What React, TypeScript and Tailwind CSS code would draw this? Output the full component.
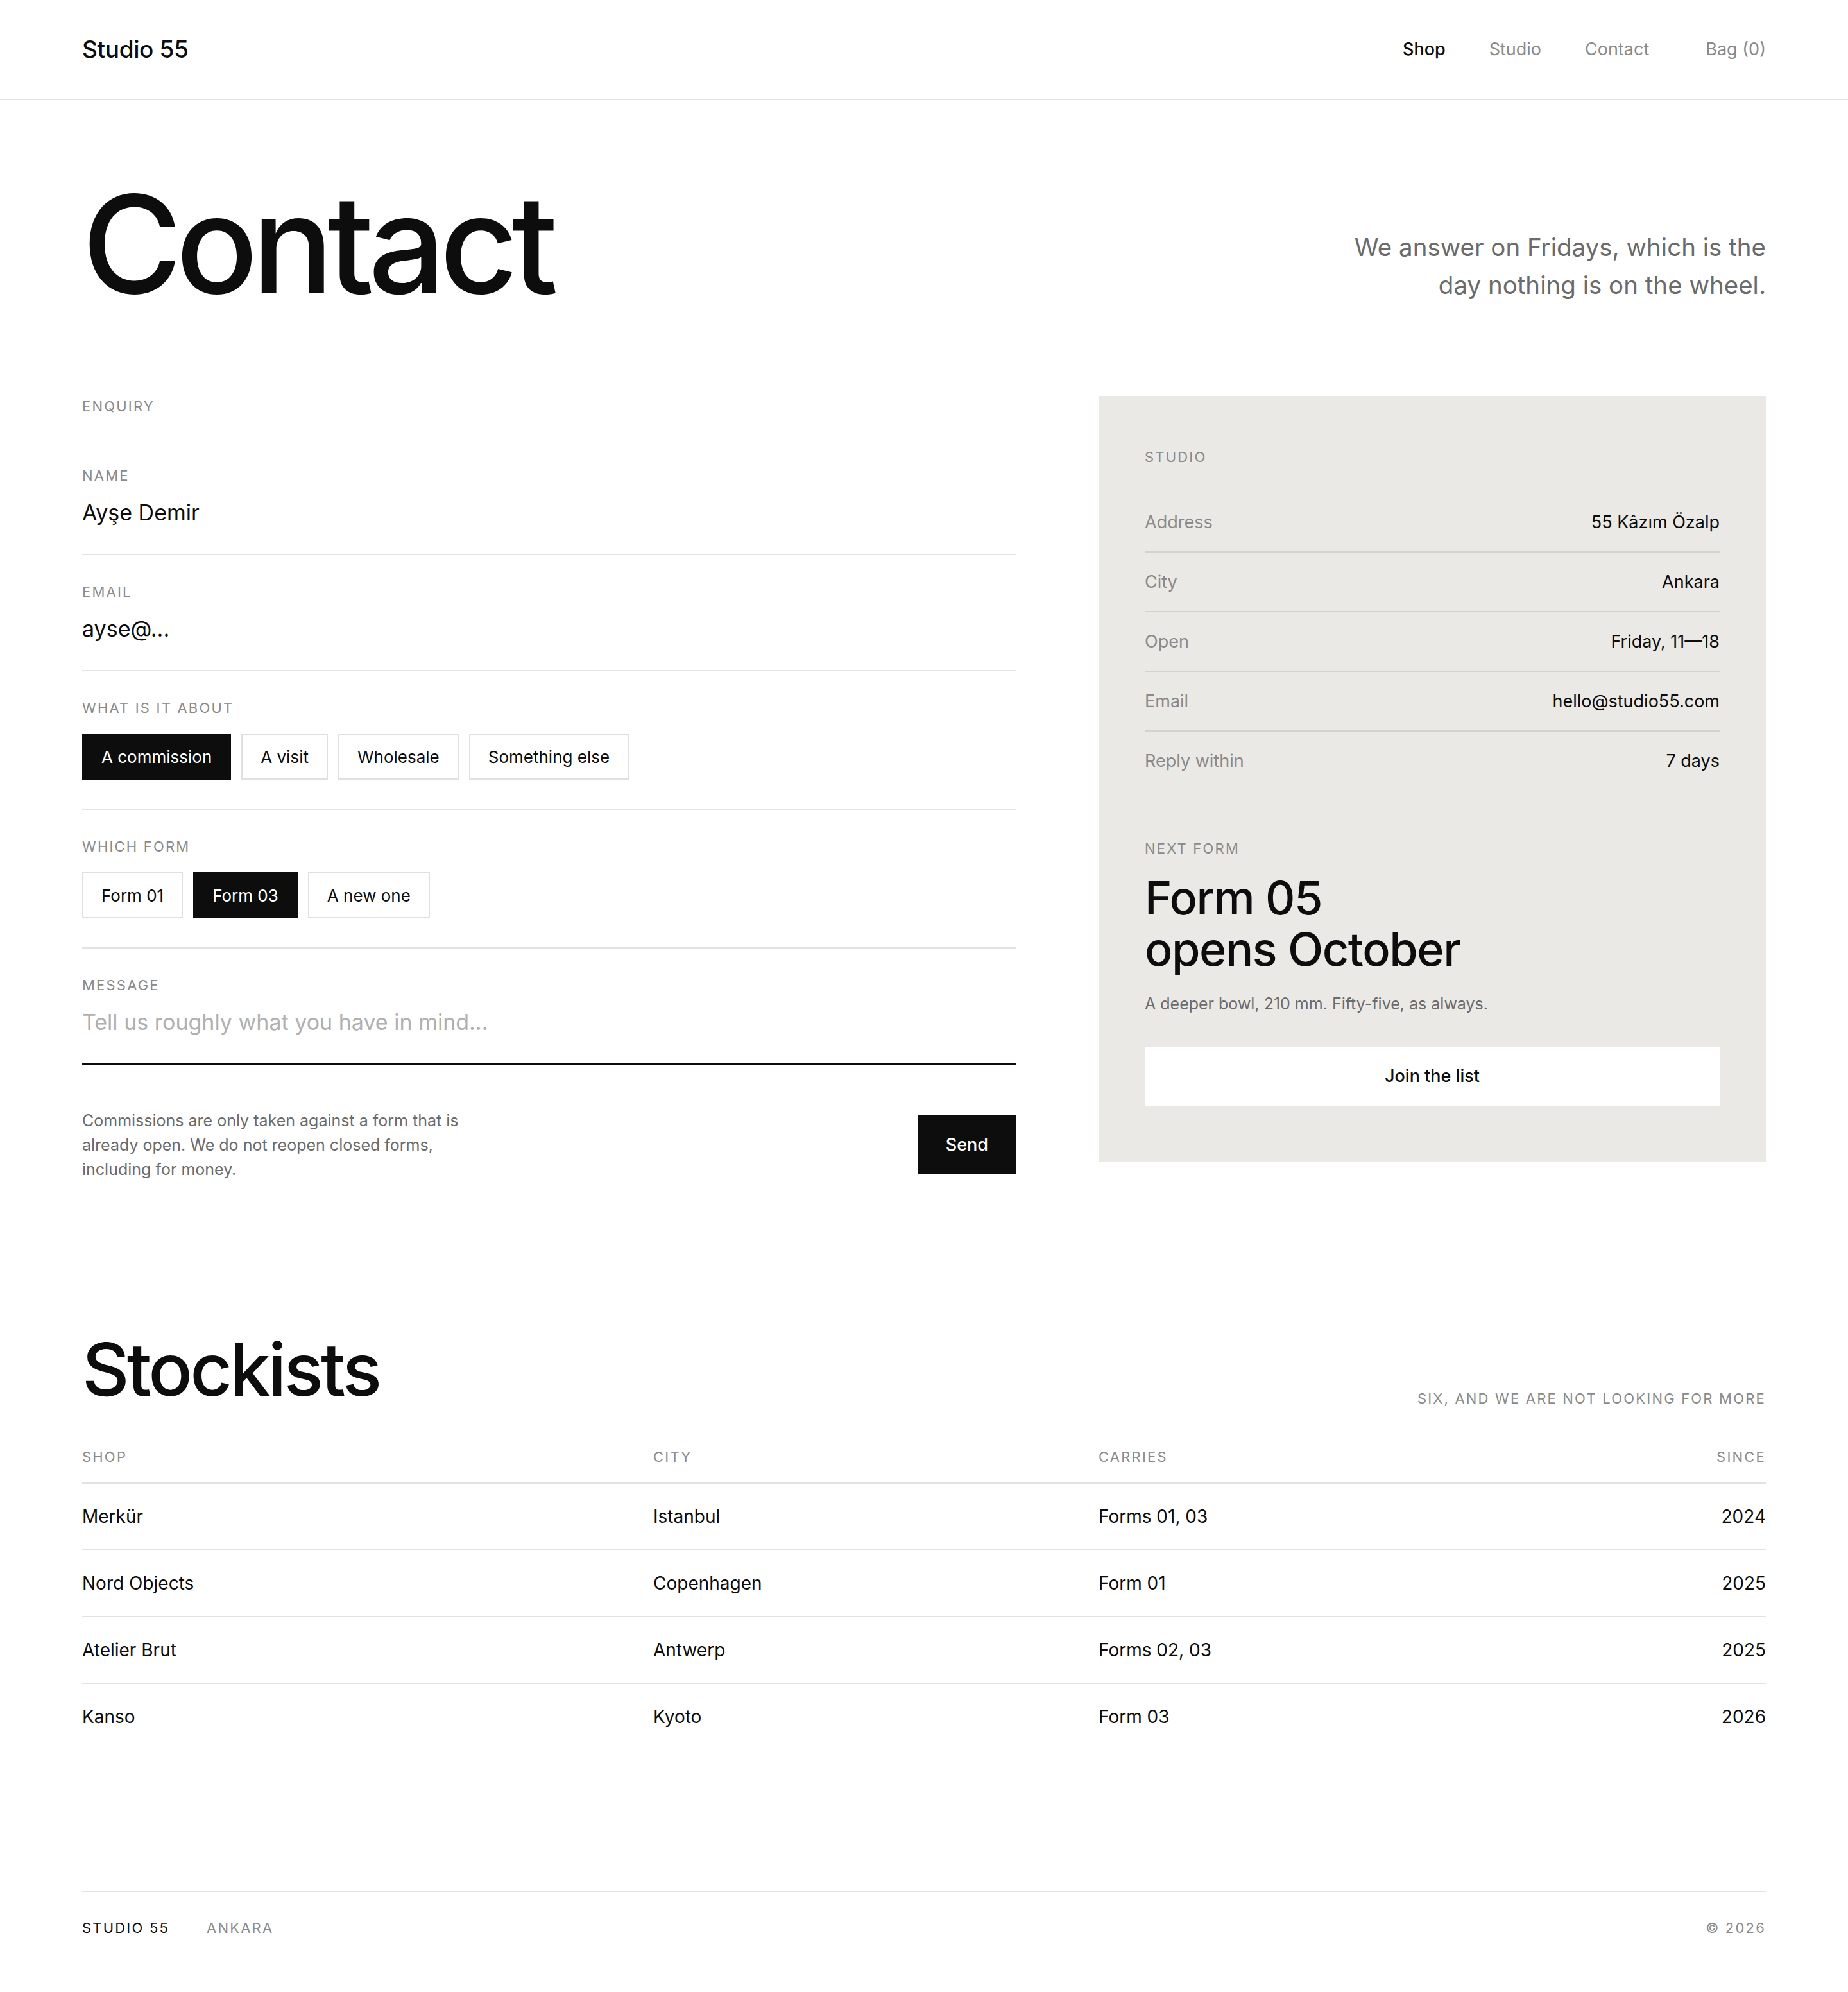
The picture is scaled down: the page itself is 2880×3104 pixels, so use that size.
const LABEL = "text-[22px] leading-8 uppercase tracking-[0.1em] text-[#8a8a8a]";
const COLS = "grid grid-cols-[890px_694px_1fr_auto]";

const studioRows = [
  { label: "Address", value: "55 Kâzım Özalp" },
  { label: "City", value: "Ankara" },
  { label: "Open", value: "Friday, 11—18" },
  { label: "Email", value: "hello@studio55.com" },
  { label: "Reply within", value: "7 days" },
];

const stockists = [
  { shop: "Merkür", city: "Istanbul", carries: "Forms 01, 03", since: "2024" },
  { shop: "Nord Objects", city: "Copenhagen", carries: "Form 01", since: "2025" },
  { shop: "Atelier Brut", city: "Antwerp", carries: "Forms 02, 03", since: "2025" },
  { shop: "Kanso", city: "Kyoto", carries: "Form 03", since: "2026" },
];

function Chip({ label, active }: { label: string; active?: boolean }) {
  return (
    <button
      className={
        active
          ? "h-[72px] px-[28px] text-[26px] border-2 border-[#0d0d0d] bg-[#0d0d0d] text-white"
          : "h-[72px] px-[28px] text-[26px] border-2 border-[#e0e0e0] bg-white text-[#0d0d0d]"
      }
    >
      {label}
    </button>
  );
}

function Field({ label, children, dark }: { label: string; children: React.ReactNode; dark?: boolean }) {
  return (
    <div className={dark ? "pt-[41px] pb-9 border-b-2 border-[#0d0d0d]" : "pt-[41px] pb-9 border-b-2 border-[#e2e2e2]"}>
      <div className={LABEL}>{label}</div>
      <div className="mt-[14px]">{children}</div>
    </div>
  );
}

function ChipField({ label, children }: { label: string; children: React.ReactNode }) {
  return (
    <div className="pt-[41px] pb-[45px] border-b-2 border-[#e2e2e2]">
      <div className={LABEL}>{label}</div>
      <div className="mt-6 flex gap-4">{children}</div>
    </div>
  );
}

export default function App() {
  return (
    <div className="min-h-screen bg-white text-[#0d0d0d] font-['Inter','Noto_Sans',sans-serif] antialiased">
      {/* Header */}
      <header className="h-[156px] border-b-2 border-[#e2e2e2]">
        <div className="h-full px-32 flex items-center justify-between">
          <div className="text-[37px] font-medium tracking-[-0.01em]">Studio 55</div>
          <nav className="flex items-center gap-[68px] text-[27px]">
            <a className="font-medium text-[#0d0d0d]">Shop</a>
            <a className="text-[#8a8a8a]">Studio</a>
            <a className="text-[#8a8a8a]">Contact</a>
            <a className="ml-[20px] text-[#8a8a8a]">Bag (0)</a>
          </nav>
        </div>
      </header>

      <main className="px-32">
        {/* Title */}
        <div className="pt-[118px] flex items-end justify-between">
          <h1 className="text-[212px] leading-none font-medium tracking-[-0.045em]">Contact</h1>
          <p className="max-w-[670px] text-right text-[38.5px] leading-[59px] text-[#6b6b6b] mb-[12px]">
            We answer on Fridays, which is the day nothing is on the wheel.
          </p>
        </div>

        {/* Form + studio panel */}
        <div className="mt-[131px] grid grid-cols-[7fr_5fr] gap-32 items-start">
          <div>
            <div className={LABEL}>Enquiry</div>
            <div className="mt-[35px]">
              <Field label="Name">
                <div className="text-[34px] leading-[56px]">Ayşe Demir</div>
              </Field>
              <Field label="Email">
                <div className="text-[34px] leading-[56px]">ayse@...</div>
              </Field>
              <ChipField label="What is it about">
                <Chip label="A commission" active />
                <Chip label="A visit" />
                <Chip label="Wholesale" />
                <Chip label="Something else" />
              </ChipField>
              <ChipField label="Which form">
                <Chip label="Form 01" />
                <Chip label="Form 03" active />
                <Chip label="A new one" />
              </ChipField>
              <Field label="Message" dark>
                <div className="text-[34px] leading-[56px] text-[#b0b0b0]">Tell us roughly what you have in mind...</div>
              </Field>
            </div>
            <div className="mt-[68px] flex items-center justify-between">
              <p className="max-w-[620px] text-[25px] leading-[38px] text-[#6b6b6b]">
                Commissions are only taken against a form that is already open. We do not reopen closed forms,
                including for money.
              </p>
              <button className="h-[92px] px-[44px] bg-[#0d0d0d] text-white text-[27px] font-medium">Send</button>
            </div>
          </div>

          <aside className="bg-[#ebe9e5] px-[72px] pt-[79px] pb-[88px]">
            <div className={LABEL}>Studio</div>
            <div className="mt-10">
              {studioRows.map((r, i) => (
                <div
                  key={r.label}
                  className={
                    i < studioRows.length - 1
                      ? "flex justify-between py-[25px] text-[27px] leading-[41px] border-b-2 border-[#d4d2ce]"
                      : "flex justify-between py-[25px] text-[27px] leading-[41px]"
                  }
                >
                  <span className="text-[#8a8a8a]">{r.label}</span>
                  <span className="text-[#0d0d0d]">{r.value}</span>
                </div>
              ))}
            </div>
            <div className={LABEL + " mt-[75px]"}>Next form</div>
            <h2 className="mt-[21px] text-[72px] leading-[80px] font-medium tracking-[-0.02em]">
              Form 05
              <br />
              opens October
            </h2>
            <p className="mt-[26px] text-[25px] leading-[38px] text-[#6b6b6b]">
              A deeper bowl, 210 mm. Fifty-five, as always.
            </p>
            <button className="mt-12 w-full h-[92px] bg-white text-[27px] font-medium text-[#0d0d0d]">
              Join the list
            </button>
          </aside>
        </div>

        {/* Stockists */}
        <section className="mt-[236px]">
          <div className="flex items-end justify-between">
            <h2 className="text-[114px] leading-none font-medium tracking-[-0.035em]">Stockists</h2>
            <div className={LABEL + " -mb-[4px]"}>Six, and we are not looking for more</div>
          </div>
          <div className="mt-[63px]">
            <div className={COLS + " pb-[24px] border-b-2 border-[#e2e2e2]"}>
              <div className={LABEL}>Shop</div>
              <div className={LABEL}>City</div>
              <div className={LABEL}>Carries</div>
              <div className={LABEL + " text-right"}>Since</div>
            </div>
            {stockists.map((s, i) => (
              <div
                key={s.shop}
                className={
                  i < stockists.length - 1
                    ? COLS + " py-[31px] text-[28px] leading-10 border-b-2 border-[#e2e2e2]"
                    : COLS + " py-[31px] text-[28px] leading-10"
                }
              >
                <div>{s.shop}</div>
                <div>{s.city}</div>
                <div>{s.carries}</div>
                <div className="text-right">{s.since}</div>
              </div>
            ))}
          </div>
        </section>
      </main>

      {/* Footer */}
      <footer className="mt-[220px] px-32">
        <div className="border-t-2 border-[#e2e2e2] pt-[40px] pb-[80px] flex items-center justify-between">
          <div className="flex gap-[58px]">
            <span className="text-[22px] leading-8 uppercase tracking-[0.1em] text-[#0d0d0d]">Studio 55</span>
            <span className={LABEL}>Ankara</span>
          </div>
          <span className={LABEL}>© 2026</span>
        </div>
      </footer>
    </div>
  );
}
